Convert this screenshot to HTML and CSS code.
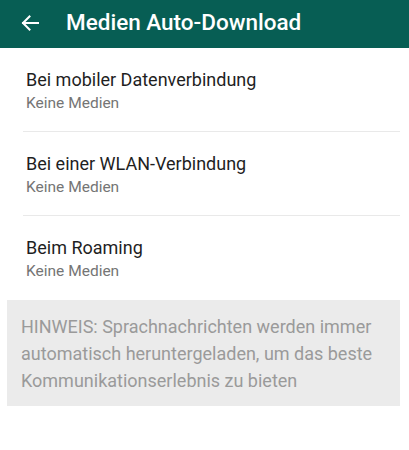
FILE: index.html
```html
<!DOCTYPE html>
<html lang="de">
<head>
<meta charset="utf-8">
<link rel="stylesheet" href="styles.css">
</head>
<body>
<header class="bar">
  <svg class="back" width="18" height="16" viewBox="0 0 18 16" aria-hidden="true">
    <path d="M17 8H2M8.5 1.5L2 8l6.5 6.5" fill="none" stroke="#fff" stroke-width="2" stroke-linecap="square"/>
  </svg>
  <h1 class="title">Medien Auto-Download</h1>
</header>
<ul class="list">
  <li class="item divided">
    <div class="item-title">Bei mobiler Datenverbindung</div>
    <div class="item-sub">Keine Medien</div>
  </li>
  <li class="item divided">
    <div class="item-title">Bei einer WLAN-Verbindung</div>
    <div class="item-sub">Keine Medien</div>
  </li>
  <li class="item">
    <div class="item-title">Beim Roaming</div>
    <div class="item-sub">Keine Medien</div>
  </li>
</ul>
<div class="note">HINWEIS: Sprachnachrichten werden immer automatisch heruntergeladen, um das beste Kommunikationserlebnis zu bieten</div>
</body>
</html>
```
FILE: styles.css
```css
html, body {
  margin: 0;
  padding: 0;
  background: #ffffff;
  font-family: Roboto, "Noto Sans", sans-serif;
}
.bar {
  height: 48px;
  background: #075e54;
  display: flex;
  align-items: center;
  padding-left: 21px;
  box-sizing: border-box;
}
.back {
  display: block;
  margin-top: -2px;
}
.title {
  margin: -4px 0 0 27px;
  color: #ffffff;
  font-size: 22.5px;
  font-weight: 500;
  line-height: 24px;
}
.list {
  list-style: none;
  margin: 0;
  padding: 0;
}
.item {
  height: 83px;
  box-sizing: border-box;
  padding: 21px 0 0 26px;
  margin: 0 9px 0 0;
}
.divided {
  height: 84px;
  border-bottom: 1px solid #e9e9e9;
  margin-left: 23px;
  padding-left: 3px;
}
.item-title {
  font-size: 18px;
  line-height: 22px;
  color: #1f1f1f;
}
.item-sub {
  margin-top: 2px;
  font-size: 15.5px;
  line-height: 21px;
  color: #757575;
}
.note {
  margin: 1px 9px 0 7px;
  height: 106px;
  box-sizing: border-box;
  padding: 13px 8px 0 14px;
  background: #ebebeb;
  color: #9a9a9a;
  font-size: 18px;
  line-height: 27px;
}
```
